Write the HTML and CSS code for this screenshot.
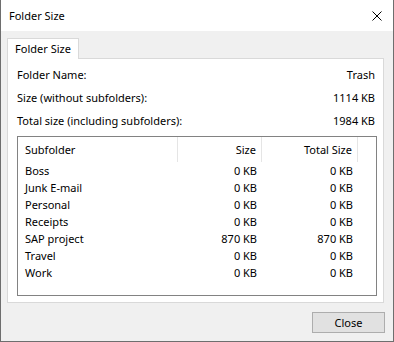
FILE: index.html
```html
<!DOCTYPE html>
<html>
<head>
    <title>Folder Size</title>
    <link rel="stylesheet" href="styles.css">
</head>
<body>
    <div class="window">
        <div class="title-bar">
            <span class="title">Folder Size</span>
            <button class="close-x" aria-label="Close">
                <svg width="10" height="10" viewBox="0 0 10 10">
                    <path d="M0.5 0.5 L9.5 9.5 M9.5 0.5 L0.5 9.5" stroke="#000" stroke-width="1" fill="none"/>
                </svg>
            </button>
        </div>
        <div class="dialog-body">
            <div class="tabs">
                <div class="tab active">Folder Size</div>
            </div>
            <div class="tab-panel">
                <div class="info-row">
                    <span>Folder Name:</span>
                    <span>Trash</span>
                </div>
                <div class="info-row">
                    <span>Size (without subfolders):</span>
                    <span>1114 KB</span>
                </div>
                <div class="info-row">
                    <span>Total size (including subfolders):</span>
                    <span>1984 KB</span>
                </div>
                <div class="list-view">
                    <div class="list-header">
                        <div class="col col-name">Subfolder</div>
                        <div class="col col-num">Size</div>
                        <div class="col col-num">Total Size</div>
                    </div>
                    <div class="list-row">
                        <div class="col col-name">Boss</div>
                        <div class="col col-num">0 KB</div>
                        <div class="col col-num">0 KB</div>
                    </div>
                    <div class="list-row">
                        <div class="col col-name">Junk E-mail</div>
                        <div class="col col-num">0 KB</div>
                        <div class="col col-num">0 KB</div>
                    </div>
                    <div class="list-row">
                        <div class="col col-name">Personal</div>
                        <div class="col col-num">0 KB</div>
                        <div class="col col-num">0 KB</div>
                    </div>
                    <div class="list-row">
                        <div class="col col-name">Receipts</div>
                        <div class="col col-num">0 KB</div>
                        <div class="col col-num">0 KB</div>
                    </div>
                    <div class="list-row">
                        <div class="col col-name">SAP project</div>
                        <div class="col col-num">870 KB</div>
                        <div class="col col-num">870 KB</div>
                    </div>
                    <div class="list-row">
                        <div class="col col-name">Travel</div>
                        <div class="col col-num">0 KB</div>
                        <div class="col col-num">0 KB</div>
                    </div>
                    <div class="list-row">
                        <div class="col col-name">Work</div>
                        <div class="col col-num">0 KB</div>
                        <div class="col col-num">0 KB</div>
                    </div>
                </div>
            </div>
            <div class="button-row">
                <button class="btn">Close</button>
            </div>
        </div>
    </div>
</body>
</html>
```

FILE: styles.css
```css
* {
    box-sizing: border-box;
    margin: 0;
    padding: 0;
}

body {
    font-family: 'Noto Sans', 'Open Sans', sans-serif;
    font-size: 11px;
    color: #000;
    background: #fff;
}

.window {
    width: 394px;
    height: 342px;
    border: 1px solid #6e6e6e;
    border-top: none;
    display: flex;
    flex-direction: column;
    background: #f0f0f0;
}

.title-bar {
    height: 31px;
    background: #fff;
    display: flex;
    align-items: center;
    justify-content: space-between;
    padding-left: 8px;
}

.title {
    line-height: 31px;
}

.close-x {
    border: none;
    background: none;
    width: 30px;
    height: 31px;
    display: flex;
    align-items: center;
    justify-content: center;
    margin-right: 1px;
}

.dialog-body {
    flex: 1;
    padding: 7px 8px 0 6px;
    display: flex;
    flex-direction: column;
}

.tabs {
    display: flex;
    position: relative;
    z-index: 1;
    margin-bottom: -1px;
}

.tab {
    height: 21px;
    line-height: 19px;
    width: 72px;
    text-align: center;
    white-space: nowrap;
    border: 1px solid #d9d9d9;
    border-bottom: none;
    background: #fff;
}

.tab-panel {
    background: #fff;
    border: 1px solid #d9d9d9;
    height: 245px;
    padding: 4px 6px 0 9px;
    margin-right: 1px;
}

.info-row {
    display: flex;
    justify-content: space-between;
    height: 23px;
    line-height: 23px;
    padding-right: 2px;
}

.list-view {
    margin-top: 4px;
    height: 160px;
    border: 1px solid #828282;
}

.list-header,
.list-row {
    display: grid;
    grid-template-columns: 160px 84px 96px;
}

.list-header {
    height: 25px;
    line-height: 25px;
}

.list-header .col {
    border-right: 1px solid #e5e5e5;
}

.list-row {
    height: 17px;
    line-height: 17px;
}

.col-name {
    padding-left: 7px;
}

.col-num {
    text-align: right;
    padding-right: 5px;
}

.button-row {
    display: flex;
    justify-content: flex-end;
    padding-top: 9px;
}

.btn {
    width: 73px;
    height: 21px;
    border: 1px solid #adadad;
    background: #e1e1e1;
    font-family: inherit;
    font-size: 11px;
    color: #000;
}
```
